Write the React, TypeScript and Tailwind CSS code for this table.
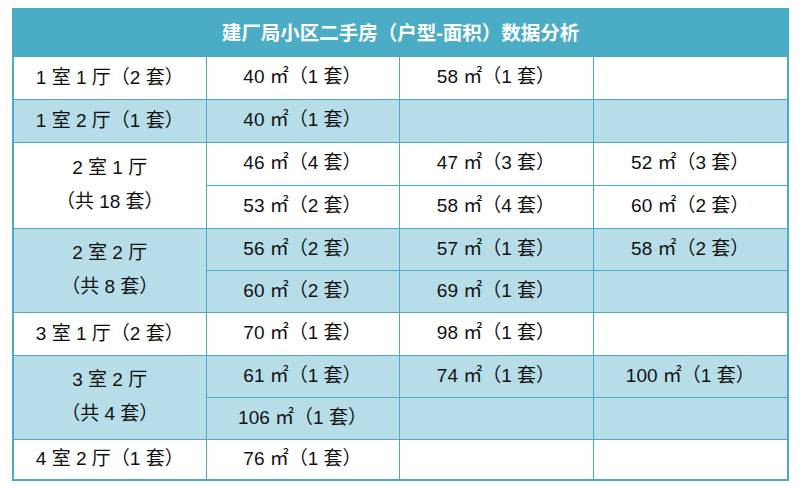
import React from "react";

const font = '"Liberation Sans", "Noto Sans CJK SC", sans-serif';

export default function App() {
  const td = "border border-[#4bacc6] text-center align-middle p-0 text-[19px] text-[#111]";
  const rows: { h: number; shade: boolean; label?: React.ReactNode; span?: number; cells: string[] }[] = [
    { h: 43, shade: false, label: "1 室 1 厅（2 套）", span: 1, cells: ["40 ㎡（1 套）", "58 ㎡（1 套）", ""] },
    { h: 43, shade: true, label: "1 室 2 厅（1 套）", span: 1, cells: ["40 ㎡（1 套）", "", ""] },
    { h: 43, shade: false, label: (<><div>2 室 1 厅</div><div className="mt-[10px]">（共 18 套）</div></>), span: 2, cells: ["46 ㎡（4 套）", "47 ㎡（3 套）", "52 ㎡（3 套）"] },
    { h: 43, shade: false, cells: ["53 ㎡（2 套）", "58 ㎡（4 套）", "60 ㎡（2 套）"] },
    { h: 42, shade: true, label: (<><div>2 室 2 厅</div><div className="mt-[10px]">（共 8 套）</div></>), span: 2, cells: ["56 ㎡（2 套）", "57 ㎡（1 套）", "58 ㎡（2 套）"] },
    { h: 42, shade: true, cells: ["60 ㎡（2 套）", "69 ㎡（1 套）", ""] },
    { h: 43, shade: false, label: "3 室 1 厅（2 套）", span: 1, cells: ["70 ㎡（1 套）", "98 ㎡（1 套）", ""] },
    { h: 42, shade: true, label: (<><div>3 室 2 厅</div><div className="mt-[10px]">（共 4 套）</div></>), span: 2, cells: ["61 ㎡（1 套）", "74 ㎡（1 套）", "100 ㎡（1 套）"] },
    { h: 42, shade: true, cells: ["106 ㎡（1 套）", "", ""] },
    { h: 41, shade: false, label: "4 室 2 厅（1 套）", span: 1, cells: ["76 ㎡（1 套）", "", ""] },
  ];
  return (
    <div className="w-[800px] h-[488px] bg-white pt-[8px] pl-[12px]" style={{ fontFamily: font }}>
      <table className="w-[775px] border-collapse table-fixed border-2 border-[#4bacc6]">
        <colgroup>
          <col className="w-[193px]" />
          <col className="w-[193px]" />
          <col className="w-[194px]" />
          <col className="w-[195px]" />
        </colgroup>
        <tbody>
          <tr className="h-[47px]">
            <td colSpan={4} className="bg-[#4bacc6] border border-[#4bacc6] text-center align-middle text-white font-bold text-[19.5px] pt-[2px]">
              建厂局小区二手房（户型-面积）数据分析
            </td>
          </tr>
          {rows.map((r, i) => (
            <tr key={i} style={{ height: r.h }} className={r.shade ? "bg-[#b7dee8]" : "bg-white"}>
              {r.label !== undefined && (
                <td rowSpan={r.span} className={td + " leading-[24px]"}>
                  {r.label}
                </td>
              )}
              {r.cells.map((c, j) => (
                <td key={j} className={td}>
                  {c}
                </td>
              ))}
            </tr>
          ))}
        </tbody>
      </table>
    </div>
  );
}
